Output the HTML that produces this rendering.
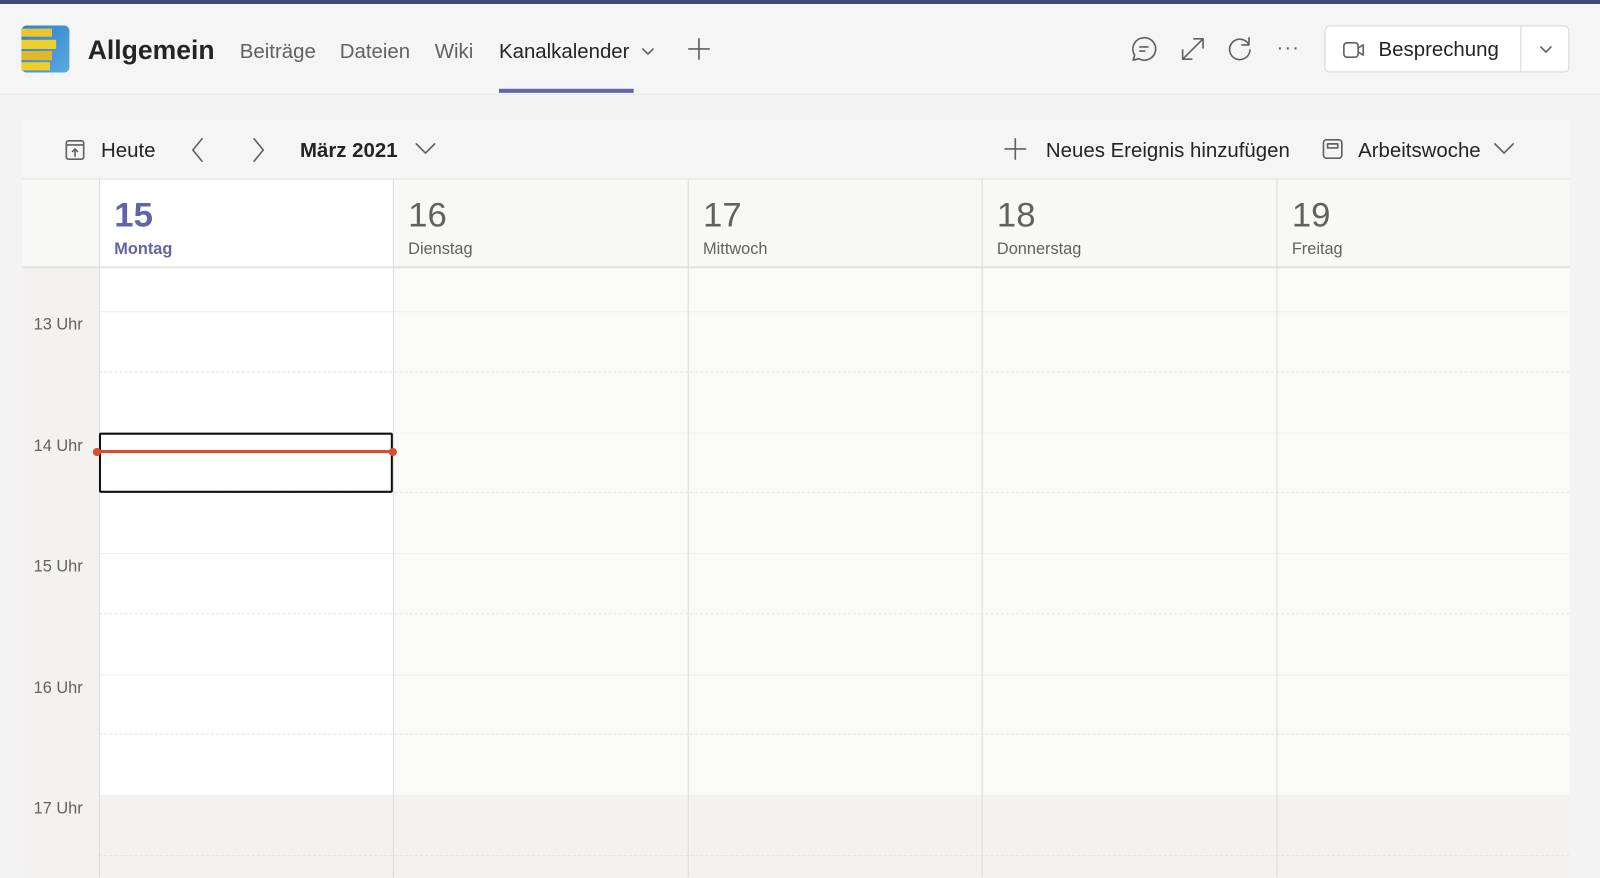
<!DOCTYPE html>
<html><head><meta charset="utf-8"><style>
*{margin:0;padding:0;box-sizing:border-box}
html,body{width:1600px;height:877px;overflow:hidden;background:#f3f3f3}
body{font-family:"Liberation Sans",sans-serif;color:#252423}
#w{position:absolute;left:0;top:0;width:1568px;height:860px;transform:scale(1.0204);transform-origin:0 0;overflow:hidden}
.a{position:absolute}
.top{left:0;top:0;width:1568px;height:4px;background:#464775}
.hdr{left:0;top:4px;width:1568px;height:89px;background:#f5f5f5;border-bottom:1px solid #e6e6e6}
.tab{top:40px;font-size:20px;color:#616161}
.ico{stroke:#616161;fill:none;stroke-width:1.6;stroke-linecap:round;stroke-linejoin:round}
.tb{left:22px;top:117px;width:1516px;height:58px;background:#f5f5f5}
.tbt{top:137px;font-size:20px;color:#252423}
.vl{width:1px;background:#dcdcdc;top:175px;height:702px}
.dn{top:192px;font-size:34px;color:#616161}
.dd{top:236px;font-size:16px;color:#616161}
.tl{left:33px;font-size:16px;color:#616161}
.hl{left:97px;width:1441px;height:1px;background:#efefef}
.dl{left:97px;width:1441px;height:0;border-top:1px dashed #e3e3e3}
</style></head><body><div id="w">
<div class="a top"></div>
<div class="a hdr"></div>
<div class="a" style="left:21px;top:25px;width:47px;height:46px;border-radius:5px;background:linear-gradient(135deg,#2d7fc7,#5ba9e0);overflow:hidden">
 <div class="a" style="left:0;top:3px;width:30px;height:8px;background:#e8c531"></div>
 <div class="a" style="left:0;top:14px;width:34px;height:9px;background:#f0cf2a"></div>
 <div class="a" style="left:0;top:25px;width:30px;height:9px;background:#e0b92a"></div>
 <div class="a" style="left:0;top:36px;width:28px;height:8px;background:#f0cf2a"></div>
</div>
<div class="a" style="left:86px;top:34px;font-size:26px;font-weight:bold;color:#252423">Allgemein</div>
<div class="a tab" style="left:235px">Beiträge</div>
<div class="a tab" style="left:333px">Dateien</div>
<div class="a tab" style="left:426px">Wiki</div>
<div class="a tab" style="left:489px;color:#252423">Kanalkalender</div>
<svg class="a" style="left:628px;top:46px" width="14" height="10"><path class="ico" d="M2 2l5 5 5-5" stroke-width="1.2"/></svg>
<div class="a" style="left:489px;top:87px;width:132px;height:4px;background:#6264a7"></div>
<svg class="a" style="left:673px;top:36px" width="24" height="24"><path class="ico" d="M12 2v20M2 12h20" stroke-width="1.5"/></svg>
<svg class="a" style="left:1107px;top:34px" width="28" height="28"><path class="ico" d="M14 3a11 11 0 1 1-5 20.5L3.5 25l1.5-5A11 11 0 0 1 14 3zM10 12h8M10 16h5"/></svg>
<svg class="a" style="left:1155px;top:34px" width="28" height="28"><path class="ico" d="M4 24L24 4M15 4h9v9M4 15v9h9"/></svg>
<svg class="a" style="left:1201px;top:34px" width="28" height="28"><path class="ico" d="M23 10a10 10 0 1 0 1 5M23 3v7h-7"/></svg>
<div class="a" style="left:1251px;top:36px;font-size:20px;color:#616161;letter-spacing:1px">···</div>
<div class="a" style="left:1298px;top:25px;width:240px;height:46px;background:#fff;border:1px solid #d6d6d6;border-radius:5px"></div>
<div class="a" style="left:1490px;top:26px;width:1px;height:44px;background:#d6d6d6"></div>
<svg class="a" style="left:1314px;top:36px" width="26" height="26"><rect class="ico" x="3" y="6" width="14" height="14" rx="3" stroke="#424242"/><path class="ico" d="M17 11l5-3v10l-5-3" stroke="#424242"/></svg>
<div class="a" style="left:1351px;top:38px;font-size:20px;color:#252423">Besprechung</div>
<svg class="a" style="left:1508px;top:44px" width="14" height="10"><path class="ico" d="M2 2l5 5 5-5" stroke-width="1.2"/></svg>

<div class="a tb"></div>
<svg class="a" style="left:63px;top:136px" width="22" height="22"><rect class="ico" x="2" y="2" width="17" height="18" rx="2"/><path class="ico" d="M2 6h17M10.5 17v-7M8 12.5l2.5-2.5 2.5 2.5" stroke-width="1.3"/></svg>
<div class="a tbt" style="left:99px">Heute</div>
<svg class="a" style="left:184px;top:134px" width="20" height="26"><path class="ico" d="M14 2L5 13l9 11" stroke-width="1.5"/></svg>
<svg class="a" style="left:243px;top:134px" width="20" height="26"><path class="ico" d="M6 2l9 11-9 11" stroke-width="1.5"/></svg>
<div class="a tbt" style="left:294px;font-weight:bold">März 2021</div>
<svg class="a" style="left:406px;top:139px" width="22" height="14"><path class="ico" d="M2 2l9 9 9-9" stroke-width="1.4"/></svg>
<svg class="a" style="left:983px;top:134px" width="24" height="24"><path class="ico" d="M12 2v20M2 12h20" stroke-width="1.5"/></svg>
<div class="a tbt" style="left:1025px">Neues Ereignis hinzufügen</div>
<svg class="a" style="left:1294px;top:134px" width="24" height="24"><rect class="ico" x="3" y="3" width="18" height="18" rx="3"/><rect class="ico" x="7" y="7" width="10" height="4" stroke-width="1.3"/></svg>
<div class="a tbt" style="left:1331px">Arbeitswoche</div>
<svg class="a" style="left:1463px;top:139px" width="22" height="14"><path class="ico" d="M2 2l9 9 9-9" stroke-width="1.4"/></svg>

<div class="a" style="left:22px;top:175px;width:1516px;height:88px;background:#f8f8f7;border-top:1px solid #e1e1e1;border-bottom:2px solid #e1e1e1"></div>
<div class="a" style="left:98px;top:176px;width:287px;height:85px;background:#fff"></div>
<div class="a" style="left:22px;top:263px;width:75px;height:614px;background:#f3f2f1"></div>
<div class="a" style="left:97px;top:263px;width:1441px;height:516px;background:#fafaf9"></div>
<div class="a" style="left:97px;top:263px;width:288px;height:516px;background:#fff"></div>
<div class="a" style="left:97px;top:779px;width:1441px;height:98px;background:#f3f2f1"></div>

<div class="a hl" style="top:305px"></div><div class="a dl" style="top:364px"></div>
<div class="a hl" style="top:424px"></div><div class="a dl" style="top:482px"></div>
<div class="a hl" style="top:542px"></div><div class="a dl" style="top:601px"></div>
<div class="a hl" style="top:661px"></div><div class="a dl" style="top:719px"></div>
<div class="a hl" style="top:779px"></div><div class="a dl" style="top:838px"></div>

<div class="a vl" style="left:97px"></div>
<div class="a vl" style="left:385px"></div>
<div class="a vl" style="left:674px"></div>
<div class="a vl" style="left:962px"></div>
<div class="a vl" style="left:1251px"></div>

<div class="a dn" style="left:112px;color:#6264a7;font-weight:bold">15</div>
<div class="a dd" style="left:112px;color:#6264a7;font-weight:bold">Montag</div>
<div class="a dn" style="left:400px">16</div><div class="a dd" style="left:400px">Dienstag</div>
<div class="a dn" style="left:689px">17</div><div class="a dd" style="left:689px">Mittwoch</div>
<div class="a dn" style="left:977px">18</div><div class="a dd" style="left:977px">Donnerstag</div>
<div class="a dn" style="left:1266px">19</div><div class="a dd" style="left:1266px">Freitag</div>

<div class="a tl" style="top:310px">13 Uhr</div>
<div class="a tl" style="top:429px">14 Uhr</div>
<div class="a tl" style="top:547px">15 Uhr</div>
<div class="a tl" style="top:666px">16 Uhr</div>
<div class="a tl" style="top:784px">17 Uhr</div>

<div class="a" style="left:97px;top:424px;width:288px;height:59px;background:#fff;border:2px solid #111;border-radius:2px"></div>
<div class="a" style="left:95px;top:441px;width:291px;height:3px;background:#d74f30"></div>
<div class="a" style="left:91px;top:439px;width:8px;height:8px;border-radius:50%;background:#d74f30"></div>
<div class="a" style="left:381px;top:439px;width:8px;height:8px;border-radius:50%;background:#d74f30"></div>
</div></body></html>
